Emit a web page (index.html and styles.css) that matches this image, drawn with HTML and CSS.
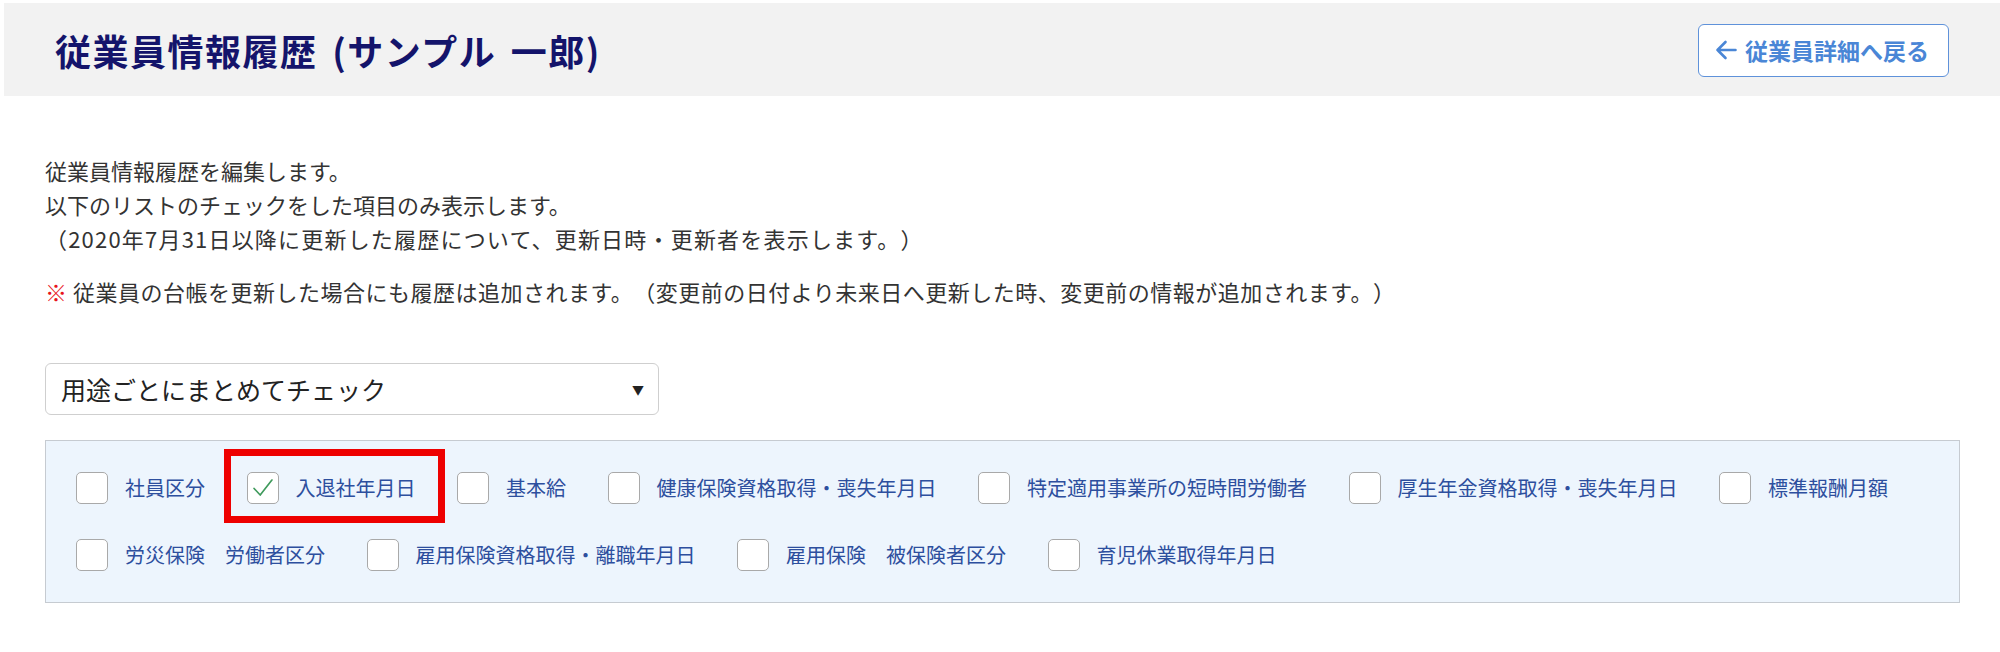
FILE: index.html
```html
<!DOCTYPE html>
<html lang="ja">
<head>
<meta charset="utf-8">
<title>従業員情報履歴</title>
<link rel="stylesheet" href="styles.css">
</head>
<body>
<header class="page-header">
  <h1 class="page-title">従業員情報履歴 (サンプル 一郎)</h1>
  <a class="back-button" href="#">
    <svg class="back-arrow" viewBox="0 0 24 24" width="24" height="24" aria-hidden="true">
      <path d="M21.5 12H3.5M11.5 4L3.5 12L11.5 20" fill="none" stroke="currentColor" stroke-width="2.6" stroke-linecap="round" stroke-linejoin="round"/>
    </svg>
    <span>従業員詳細へ戻る</span>
  </a>
</header>

<main class="content">
  <div class="description">
    <p>従業員情報履歴を編集します。</p>
    <p>以下のリストのチェックをした項目のみ表示します。</p>
    <p class="wide">（2020年7月31日以降に更新した履歴について、更新日時・更新者を表示します。）</p>
  </div>
  <p class="note"><span class="note-mark">※</span> 従業員の台帳を更新した場合にも履歴は追加されます。（変更前の日付より未来日へ更新した時、変更前の情報が追加されます。）</p>

  <div class="select-box">
    <span class="select-text">用途ごとにまとめてチェック</span>
    <span class="select-arrow">▼</span>
  </div>

  <div class="check-panel">
    <label class="check-item"><span class="box"></span><span class="label">社員区分</span></label>
    <label class="check-item highlighted"><span class="box checked"><svg viewBox="0 0 32 32" width="32" height="32" aria-hidden="true"><path d="M6.5 16.5L13 23.5L25.5 7.5" fill="none" stroke="#3f9a5c" stroke-width="1.8" stroke-linecap="round" stroke-linejoin="round"/></svg></span><span class="label">入退社年月日</span></label>
    <label class="check-item"><span class="box"></span><span class="label">基本給</span></label>
    <label class="check-item"><span class="box"></span><span class="label">健康保険資格取得・喪失年月日</span></label>
    <label class="check-item"><span class="box"></span><span class="label">特定適用事業所の短時間労働者</span></label>
    <label class="check-item"><span class="box"></span><span class="label">厚生年金資格取得・喪失年月日</span></label>
    <label class="check-item"><span class="box"></span><span class="label">標準報酬月額</span></label>
    <label class="check-item"><span class="box"></span><span class="label">労災保険　労働者区分</span></label>
    <label class="check-item"><span class="box"></span><span class="label">雇用保険資格取得・離職年月日</span></label>
    <label class="check-item"><span class="box"></span><span class="label">雇用保険　被保険者区分</span></label>
    <label class="check-item"><span class="box"></span><span class="label">育児休業取得年月日</span></label>
  </div>
</main>
</body>
</html>
```

FILE: styles.css
```css
* {
  box-sizing: border-box;
}

html, body {
  margin: 0;
  padding: 0;
  background: #ffffff;
}

body {
  font-family: "Noto Sans CJK JP", "Noto Sans", "Liberation Sans", sans-serif;
  color: #333333;
  text-spacing-trim: space-all;
}

.page-header {
  margin: 3px 0 0 4px;
  height: 93px;
  background: #f2f2f2;
  display: flex;
  align-items: center;
  justify-content: space-between;
  padding: 0 51px 0 51px;
}

.page-title {
  margin: 0;
  font-size: 36px;
  font-weight: 700;
  color: #14146b;
  line-height: 1;
  letter-spacing: 1.5px;
  word-spacing: 5px;
}

.back-button {
  display: flex;
  align-items: center;
  gap: 7px;
  width: 251px;
  height: 53px;
  padding: 0 0 0 15px;
  background: #ffffff;
  border: 1.5px solid #5f92da;
  border-radius: 6px;
  color: #4a86d6;
  font-size: 23px;
  font-weight: 700;
  text-decoration: none;
  margin-top: 1px;
}

.back-arrow {
  flex: none;
}

.content {
  padding: 0 40px 0 45px;
}

.description {
  margin-top: 57px;
}

.description p {
  margin: 0;
  font-size: 22px;
  line-height: 34px;
  color: #333333;
}

.description p.wide {
  letter-spacing: 1.2px;
}

.note {
  margin: 19px 0 0;
  font-size: 22px;
  line-height: 34px;
  color: #333333;
  letter-spacing: 0.5px;
}

.note-mark {
  color: #e8141c;
  font-weight: 700;
}

.select-box {
  margin-top: 55px;
  width: 614px;
  height: 52px;
  border: 1.5px solid #cfcfcf;
  border-radius: 6px;
  display: flex;
  align-items: center;
  justify-content: space-between;
  padding: 0 14px 0 15px;
  background: #ffffff;
}

.select-text {
  font-size: 25px;
  color: #222222;
}

.select-arrow {
  font-size: 12px;
  color: #222222;
}

.check-panel {
  margin-top: 25px;
  background: #edf5fd;
  border: 1.5px solid #c6cbd1;
  padding: 31px 30px;
  display: flex;
  flex-wrap: wrap;
  column-gap: 41.5px;
  row-gap: 35px;
}

.check-item {
  display: flex;
  align-items: center;
  gap: 17px;
  height: 32px;
  position: relative;
}

.box {
  width: 32px;
  height: 32px;
  flex: none;
  background: #ffffff;
  border: 1.5px solid #a9a9a9;
  border-radius: 5px;
  display: flex;
  align-items: center;
  justify-content: center;
}

.box svg {
  display: block;
}

.label {
  font-size: 20px;
  color: #2d4f9e;
  white-space: pre;
  line-height: 1;
}

.highlighted::after {
  content: "";
  position: absolute;
  left: -23px;
  right: -29px;
  top: -23px;
  bottom: -19px;
  border: 7px solid #ee0000;
  pointer-events: none;
}
```
